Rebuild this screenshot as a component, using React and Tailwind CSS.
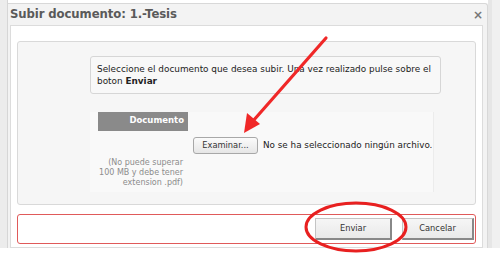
export default function App() {
  const font = { fontFamily: '"DejaVu Sans", Verdana, sans-serif' };

  return (
    <div className="relative w-[500px] h-[258px] bg-white overflow-hidden" style={font}>
      <div className="flex h-[248px]">
        {/* left page strip */}
        <div className="w-[8px] h-full bg-[#ececec] border-r border-[#d6d6d6]" />

        {/* dialog */}
        <div className="w-[480px] mt-[3px] flex flex-col bg-[#f3f3f3] border-t border-r border-[#d8d8d8] rounded-tr-[3px]">
          <div className="h-[21px] flex items-center justify-between pl-[2px] pr-[4px]">
            <span className="text-[11.7px] font-bold text-[#5a5a5a] tracking-[-0.1px]">Subir documento: 1.-Tesis</span>
            <span className="text-[12px] font-bold text-[#777] leading-none">×</span>
          </div>

          <div className="flex-1 mx-[2px] mr-[4px] bg-white border border-[#dcdcdc] px-[6px] pt-[15px]">
            {/* gray content box */}
            <div className="h-[164px] bg-[#f6f6f6] border border-[#d9d9d9] rounded-[3px] pl-[72px] pt-[14px]">
              <div className="w-[351px] h-[38px] bg-[#f8f8f8] border border-[#d6d6d6] rounded-[3px] pl-[6px] pr-0 pt-[6px] text-[8.9px] leading-[12px] text-[#222] whitespace-nowrap">
                Seleccione el documento que desea subir. Una vez realizado pulse sobre el
                <br />
                boton <b>Enviar</b>
              </div>

              <div className="mt-[18px] w-[344px] h-[80px] bg-[#f9f9f9] border-r border-[#ececec] flex">
                <div className="w-[98px] flex flex-col items-end">
                  <div className="w-[90px] h-[19px] bg-[#8a8a8a] text-white font-bold text-[8.5px] text-right pr-[4px] pt-[2px]">
                    Documento
                  </div>
                  <div className="mt-[27px] pr-[5px] text-right text-[8px] leading-[10px] text-[#8c8c8c]">
                    (No puede superar
                    <br />
                    100 MB y debe tener
                    <br />
                    extension .pdf)
                  </div>
                </div>
                <div className="pt-[25px] pl-[5px] flex items-start">
                  <button className="w-[65px] h-[17px] bg-gradient-to-b from-[#fbfbfb] to-[#e6e6e6] border border-[#a8a8a8] rounded-[3px] text-[8.3px] text-[#333]">
                    Examinar...
                  </button>
                  <span className="ml-[5px] mt-[2px] text-[8.8px] text-[#222]">No se ha seleccionado ningún archivo.</span>
                </div>
              </div>
            </div>

            {/* button bar */}
            <div className="mt-[9px] h-[30px] border border-[#e05a5a] rounded-[3px] flex items-center justify-end gap-[10px] pr-[1px]">
              <button className="w-[77px] h-[22px] bg-gradient-to-b from-[#f6f6f6] to-[#e9e9e9] border border-[#c4c4c4] border-r-[#888] border-b-[#888] border-r-2 border-b-2 text-[8.3px] text-[#333]">
                Enviar
              </button>
              <button className="w-[72px] h-[22px] bg-gradient-to-b from-[#f6f6f6] to-[#e9e9e9] border border-[#c4c4c4] border-r-[#888] border-b-[#888] border-r-2 border-b-2 text-[8.3px] text-[#333]">
                Cancelar
              </button>
            </div>
          </div>
        </div>

        {/* right page strip */}
        <div className="flex-1 h-full bg-[#f0f0f0] border-l-4 border-[#e6e6e6]" />
      </div>

      {/* annotations */}
      <svg className="absolute inset-0 pointer-events-none" width="500" height="258" viewBox="0 0 500 258">
        <line x1="326" y1="38" x2="253" y2="121" stroke="#f02828" strokeWidth="3.2" strokeLinecap="round" />
        <polygon points="244,133 247,113 260,124" fill="#f02828" />
        <ellipse cx="356" cy="227" rx="50" ry="24" fill="none" stroke="#e82020" strokeWidth="3" />
      </svg>
    </div>
  );
}
